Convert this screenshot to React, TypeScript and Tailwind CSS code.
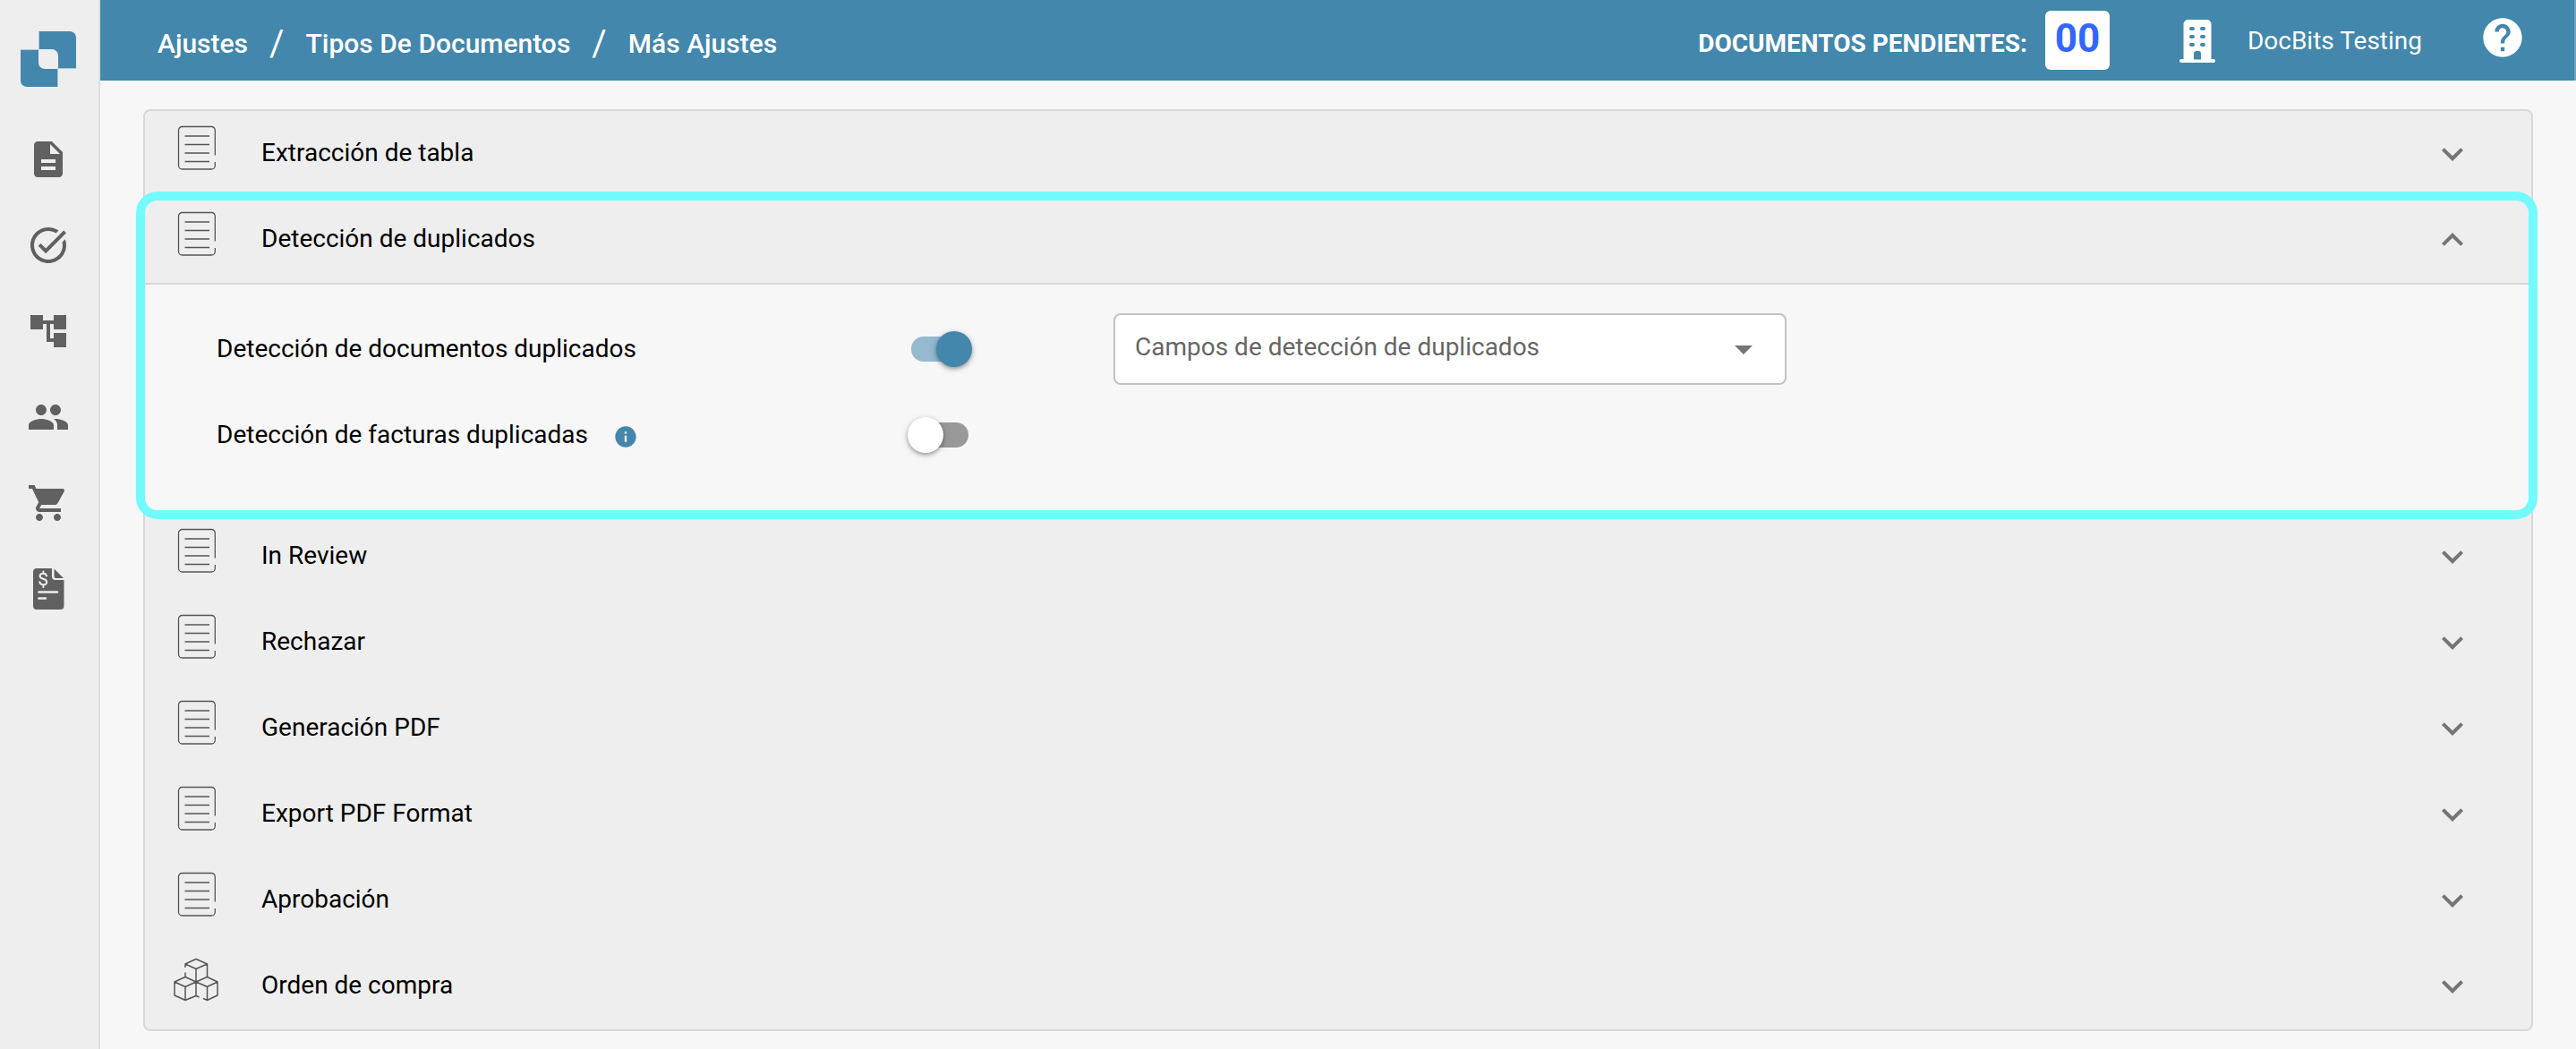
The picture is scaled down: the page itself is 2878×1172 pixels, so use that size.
import { useState, type ReactNode } from "react";
import {
  MdAccountTree,
  MdArrowDropDown,
  MdDescription,
  MdExpandLess,
  MdExpandMore,
  MdHelp,
  MdInfo,
  MdPeople,
  MdShoppingCart,
  MdTaskAlt,
} from "react-icons/md";

function Logo() {
  return (
    <svg viewBox="0 0 62 62" className="size-[62px]" aria-hidden="true">
      <path d="M20 0H55a7 7 0 0 1 7 7V42H42V27a7 7 0 0 0-7-7H20Z" fill="#4387ac" />
      <path d="M0 20H20V35a7 7 0 0 0 7 7H42V62H7a7 7 0 0 1-7-7Z" fill="#4387ac" />
      <path d="M0 20.5H20.5V0M62 41.5H41.5V62" fill="none" stroke="#a9c7d8" strokeWidth="1" />
    </svg>
  );
}

function InvoiceIcon() {
  return (
    <svg viewBox="0 0 48 48" className="size-12" aria-hidden="true">
      <path
        d="M11 1H28V10a4 4 0 0 0 4 4H41.500V43a4 4 0 0 1-4 4H11a4 4 0 0 1-4-4V5a4 4 0 0 1 4-4Z"
        fill="#606060"
      />
      <path d="M30.500 1.500 41 12H32.500a2 2 0 0 1-2-2Z" fill="#606060" />
      <g fill="none" stroke="#ededed" strokeLinecap="round">
        <path
          d="M22 9.500C21.500 7.500 20 6.800 18.300 6.800C16 6.800 14.600 8 14.600 9.700C14.600 13.700 22.200 11.700 22.200 16.200C22.200 18 20.600 19.200 18.400 19.200C16.200 19.200 14.700 18.200 14.300 16.200M18.400 4.500V6.800M18.400 19.200V22"
          strokeWidth="2"
        />
        <path d="M13.500 27.500H34M13.500 34.500H21" strokeWidth="2.600" />
      </g>
    </svg>
  );
}

function BuildingIcon() {
  return (
    <svg viewBox="0 0 40 48" className="h-12 w-10" aria-hidden="true">
      <path
        fill="#fff"
        d="M9.500 0H30.500a5 5 0 0 1 5 5V44H38a2 2 0 0 1 0 4H2a2 2 0 0 1 0-4H4.500V5a5 5 0 0 1 5-5Z"
      />
      <g fill="#4387ac">
        <rect x="11" y="8" width="6" height="4" rx="2" />
        <rect x="23" y="8" width="6" height="4" rx="2" />
        <rect x="11" y="17" width="6" height="4" rx="2" />
        <rect x="23" y="17" width="6" height="4" rx="2" />
        <rect x="11" y="26" width="6" height="4" rx="2" />
        <rect x="23" y="26" width="6" height="4" rx="2" />
        <path d="M16 44.500V38a3 3 0 0 1 3-3H21a3 3 0 0 1 3 3V44.500Z" />
      </g>
    </svg>
  );
}

function ListIcon() {
  return (
    <svg viewBox="-1 0 50 50" className="size-[50px]" fill="none" stroke="#555" strokeWidth="1.300" aria-hidden="true">
      <path d="M45.300 33.500V5.500a4 4 0 0 0-4-4H8.500a4 4 0 0 0-4 4V45a4 4 0 0 0 4 4H41.300a4 4 0 0 0 4-4V41" />
      <path d="M11.500 12H39M11.500 21.500H39M11.500 31H39M11.500 40.500H39" strokeWidth="1.500" />
    </svg>
  );
}

function CubesIcon() {
  return (
    <svg
      viewBox="0 0 50 50"
      className="size-[50px]"
      fill="none"
      stroke="#555"
      strokeWidth="1.500"
      strokeLinejoin="round"
      aria-hidden="true"
    >
      <path d="M13 11V7L25 1.500 37.500 7V21.500M13 16.500V21.500M13 7 25 12.500 37.500 7M25 12.500V42.500M13 21.500 25 27 37.500 21.500M13 21.500 1 27V42L13 47.500 25 42.500 28.500 44M1 27 13 32.500V47.500M13 32.500 25 27 37.500 32.500V47.500M37.500 21.500 49 27V42L37.500 47.500 33 45.500M49 27 37.500 32.500" />
    </svg>
  );
}

const navItems: { label: string; icon: ReactNode }[] = [
  { label: "Documentos", icon: <MdDescription className="size-12" /> },
  { label: "Tareas", icon: <MdTaskAlt className="size-12" /> },
  { label: "Flujos", icon: <MdAccountTree className="size-12" /> },
  { label: "Usuarios", icon: <MdPeople className="size-12" /> },
  { label: "Pedidos", icon: <MdShoppingCart className="size-12" /> },
  { label: "Facturas", icon: <InvoiceIcon /> },
];

function Sidebar() {
  return (
    <aside className="w-28 shrink-0 border-r-2 border-[#dfdfdf] bg-[#eeeeee] text-[#606060]">
      <a href="#inicio" aria-label="Inicio" className="block pt-[35px] pl-[23px]">
        <Logo />
      </a>
      <nav className="mt-[57px] flex flex-col items-start gap-12 pl-[30px]">
        {navItems.map((item) => (
          <a key={item.label} href={"#" + item.label.toLowerCase()} aria-label={item.label} className="block">
            {item.icon}
          </a>
        ))}
      </nav>
    </aside>
  );
}

function Header() {
  return (
    <header className="flex h-[90px] items-center justify-between border-r-2 border-[#6fa3c0] bg-[#4387ac] pr-[54px] pl-16 text-white">
      <nav aria-label="Ruta" className="flex items-center gap-6 pt-2 text-[30px] leading-10 font-medium">
        <a href="#ajustes">Ajustes</a>
        <span className="text-[40px] font-normal">/</span>
        <a href="#tipos">Tipos De Documentos</a>
        <span className="text-[40px] font-normal">/</span>
        <a href="#mas">Más Ajustes</a>
      </nav>
      <div className="flex items-center">
        <span className="pt-2 text-[28px] font-bold">DOCUMENTOS PENDIENTES:</span>
        <span className="ml-5 flex h-[66px] w-[72px] justify-center rounded-md bg-white text-[44px] leading-[62px] font-bold text-[#3366ff]">
          00
        </span>
        <div className="ml-[78px] flex items-center gap-9 pt-0.5">
          <BuildingIcon />
          <span className="text-[28px]">DocBits Testing</span>
        </div>
        <button type="button" aria-label="Ayuda" className="ml-16 pb-1.5">
          <MdHelp className="size-[52px]" />
        </button>
      </div>
    </header>
  );
}

function SectionHeader({
  title,
  icon,
  open,
  onToggle,
}: {
  title: string;
  icon: ReactNode;
  open: boolean;
  onToggle: () => void;
}) {
  return (
    <button
      type="button"
      aria-expanded={open}
      onClick={onToggle}
      className="flex h-24 w-full items-center pr-16 pl-8 text-left text-[28px]"
    >
      <span className="pb-3.5">{icon}</span>
      <span className="ml-12 flex-1 pb-0.5">{title}</span>
      <span className="text-[#757575]">
        {open ? <MdExpandLess className="size-12" /> : <MdExpandMore className="size-12" />}
      </span>
    </button>
  );
}

function Toggle({ id, initial }: { id: string; initial: boolean }) {
  const [on, setOn] = useState(initial);
  return (
    <label htmlFor={id} className="relative flex h-10 w-[72px] cursor-pointer items-center px-1">
      <input
        id={id}
        type="checkbox"
        role="switch"
        checked={on}
        onChange={() => setOn(!on)}
        className="peer absolute size-0 opacity-0"
      />
      <span className="h-7 w-full rounded-full bg-[#999] peer-checked:bg-[#95b9ce]" />
      <span className="absolute left-0 size-10 rounded-full bg-white shadow-[0_2px_4px_rgba(0,0,0,0.3),0_2px_8px_rgba(0,0,0,0.15)] peer-checked:right-0 peer-checked:left-auto peer-checked:bg-[#4387ac]" />
    </label>
  );
}

function DuplicatesBody() {
  return (
    <div className="border-t-2 border-[#d6d6d6] bg-[#f7f7f7] pt-8 pb-12 pl-20 text-[28px]">
      <div className="flex h-20 items-center">
        <label htmlFor="dup-docs" className="w-[772px]">
          Detección de documentos duplicados
        </label>
        <Toggle id="dup-docs" initial={true} />
        <div className="relative ml-[158px] w-[752px]">
          <select
            aria-label="Campos de detección de duplicados"
            className="h-20 w-full appearance-none rounded-lg border-2 border-[#c2c2c2] bg-white pr-20 pb-1 pl-[22px] text-[#666]"
          >
            <option>Campos de detección de duplicados</option>
          </select>
          <MdArrowDropDown className="pointer-events-none absolute top-4 right-6 size-12 text-[#757575]" />
        </div>
      </div>
      <div className="mt-4 flex h-20 items-center">
        <div className="flex w-[772px] items-center gap-7">
          <label htmlFor="dup-inv">Detección de facturas duplicadas</label>
          <MdInfo className="mt-1 size-7 text-[#4387ac]" />
        </div>
        <Toggle id="dup-inv" initial={false} />
      </div>
    </div>
  );
}

const sections: { title: string; icon: ReactNode; body?: ReactNode }[] = [
  { title: "Extracción de tabla", icon: <ListIcon /> },
  { title: "Detección de duplicados", icon: <ListIcon />, body: <DuplicatesBody /> },
  { title: "In Review", icon: <ListIcon /> },
  { title: "Rechazar", icon: <ListIcon /> },
  { title: "Generación PDF", icon: <ListIcon /> },
  { title: "Export PDF Format", icon: <ListIcon /> },
  { title: "Aprobación", icon: <ListIcon /> },
  { title: "Orden de compra", icon: <CubesIcon /> },
];

export default function App() {
  const [open, setOpen] = useState("Detección de duplicados");
  return (
    <div className="flex min-h-screen bg-[#f7f7f7] font-[Roboto,sans-serif] text-black">
      <Sidebar />
      <div className="min-w-0 flex-1">
        <Header />
        <main className="pt-8 pr-12 pb-5 pl-12">
          <div className="rounded-lg border-2 border-[#d8d8d8] bg-[#eeeeee]">
            {sections.map((s) => (
              <section key={s.title} className="relative">
                <SectionHeader
                  title={s.title}
                  icon={s.icon}
                  open={open === s.title}
                  onToggle={() => setOpen(open === s.title ? "" : s.title)}
                />
                {open === s.title && s.body}
                {s.body && (
                  <div className="pointer-events-none absolute -inset-y-1.5 -right-[7px] -left-2.5 z-10 rounded-3xl border-[10px] border-[#72fbfe]" />
                )}
              </section>
            ))}
          </div>
        </main>
      </div>
    </div>
  );
}
